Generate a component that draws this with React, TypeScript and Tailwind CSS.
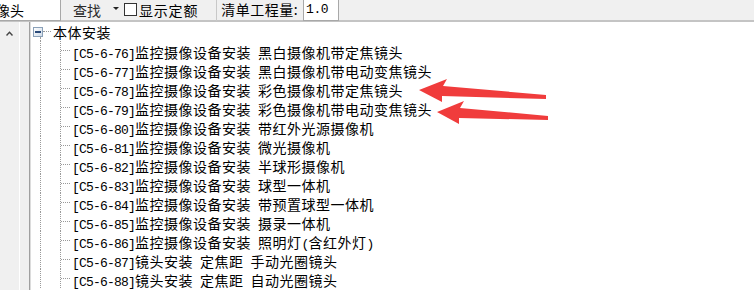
import React from "react";

const CJK = '"Noto Sans CJK SC", "Noto Sans", sans-serif';
const MONO = '"Liberation Mono", monospace';

function Rich({ text }: { text: string }) {
  const parts: { s: string; a: boolean }[] = [];
  for (const ch of text) {
    const a = ch.charCodeAt(0) < 128;
    const last = parts[parts.length - 1];
    if (last && last.a === a) last.s += ch;
    else parts.push({ s: ch, a });
  }
  return (
    <span className="whitespace-pre">
      {parts.map((p, i) =>
        p.a ? (
          <span key={i} className="text-[13px] tracking-[-0.8px]" style={{ fontFamily: MONO }}>
            {p.s}
          </span>
        ) : (
          <span key={i} className="text-[14px] tracking-[0.5px]" style={{ fontFamily: CJK }}>
            {p.s}
          </span>
        )
      )}
    </span>
  );
}

const items = [
  "[C5-6-76]监控摄像设备安装 黑白摄像机带定焦镜头",
  "[C5-6-77]监控摄像设备安装 黑白摄像机带电动变焦镜头",
  "[C5-6-78]监控摄像设备安装 彩色摄像机带定焦镜头",
  "[C5-6-79]监控摄像设备安装 彩色摄像机带电动变焦镜头",
  "[C5-6-80]监控摄像设备安装 带红外光源摄像机",
  "[C5-6-81]监控摄像设备安装 微光摄像机",
  "[C5-6-82]监控摄像设备安装 半球形摄像机",
  "[C5-6-83]监控摄像设备安装 球型一体机",
  "[C5-6-84]监控摄像设备安装 带预置球型一体机",
  "[C5-6-85]监控摄像设备安装 摄录一体机",
  "[C5-6-86]监控摄像设备安装 照明灯(含红外灯)",
  "[C5-6-87]镜头安装 定焦距 手动光圈镜头",
  "[C5-6-88]镜头安装 定焦距 自动光圈镜头",
];

export default function App() {
  return (
    <div
      className="relative w-[754px] h-[290px] overflow-hidden bg-white text-black flex flex-col"
      style={{ fontFamily: CJK }}
    >
      {/* toolbar */}
      <div className="h-[22px] shrink-0 bg-[#f0f0f0] border-b-2 border-[#c4c4c4] flex items-start">
        <div className="w-[61px] h-[21px] bg-white border-r border-b border-[#a8a8a8] overflow-hidden flex items-center">
          <span className="-ml-[4px] text-[14px] leading-[19px]">像头</span>
        </div>
        <span className="ml-[12px] text-[14px] leading-[20px] text-[#2a2a2a]">查找</span>
        <div className="ml-[12px] mt-[7px] w-0 h-0 border-l-[3px] border-r-[3px] border-t-[3px] border-l-transparent border-r-transparent border-t-[#222]" />
        <div className="ml-[5px] mt-[3px] w-[13px] h-[13px] bg-white border border-[#333]" />
        <span className="ml-[2px] text-[14px] leading-[20px] tracking-[0.8px]">显示定额</span>
        <div className="ml-[18px] w-px h-[21px] bg-[#c8c8c8]" />
        <span className="ml-[4px] text-[14px] leading-[18px] tracking-[0.5px]">清单工程量:</span>
        <div className="ml-[5px] w-[36px] h-[21px] bg-white border border-t-0 border-[#a8a8a8] flex items-center">
          <span className="ml-[2px] text-[13px] tracking-[-0.5px] leading-[18px]" style={{ fontFamily: MONO }}>
            1.0
          </span>
        </div>
      </div>

      <div className="flex flex-1 min-h-0">
        {/* left strip */}
        <div className="w-[31px] shrink-0 flex">
          <div className="w-[19px] bg-[#f0f0f0] flex justify-center pt-[9px]">
            <svg width="7" height="5" viewBox="0 0 7 5" className="ml-[-1px]">
              <path d="M0.5 4.5 L3.5 1.2 L6.5 4.5" fill="none" stroke="#444" strokeWidth="1.4" />
            </svg>
          </div>
          <div className="w-px bg-white" />
          <div className="w-[9px] bg-[#f0f0f0]" />
          <div className="w-px bg-[#a0a0a0]" />
          <div className="w-px bg-[#dcdcdc]" />
        </div>

        {/* tree */}
        <div className="flex-1 flex flex-col">
          <div className="h-[19px] flex items-stretch shrink-0">
            <div className="ml-[2px] w-[10px] flex flex-col">
              <div className="mt-[5px] w-[10px] h-[10px] border border-[#8aa0b8] bg-gradient-to-br from-white to-[#cfdbe8] flex items-center justify-center">
                <div className="w-[6px] h-[2px] bg-[#2a4a7a]" />
              </div>
              <div className="flex-1 ml-[7px] border-l border-dotted border-[#9a9a9a]" />
            </div>
            <div className="flex items-center">
              <div className="w-[8px] border-t border-dotted border-[#9a9a9a]" />
            </div>
            <span className="ml-[2px] pt-[2px] text-[14px] leading-[17px] tracking-[0.5px]">本体安装</span>
          </div>
          {items.map((t) => (
            <div key={t} className="h-[19px] flex items-stretch shrink-0">
              <div className="w-[9px]" />
              <div className="w-[20px] border-l border-dotted border-[#9a9a9a]" />
              <div className="w-[12px] border-l border-dotted border-[#9a9a9a] flex items-center">
                <div className="w-[9px] border-t border-dotted border-[#9a9a9a]" />
              </div>
              <div className="pt-[4px] leading-[15px] flex items-center">
                <Rich text={t} />
              </div>
            </div>
          ))}
        </div>
      </div>

      {/* red arrows annotation */}
      <svg className="absolute left-0 top-0 pointer-events-none" width="754" height="290">
        <polygon
          points="419,90 447,79 443,86 546,95 546,99 442,96 442,102"
          fill="#f03c3c"
        />
        <polygon
          points="437,112 464,101 460,108 548,116 548,120 459,118 459,124"
          fill="#f03c3c"
        />
      </svg>
    </div>
  );
}
